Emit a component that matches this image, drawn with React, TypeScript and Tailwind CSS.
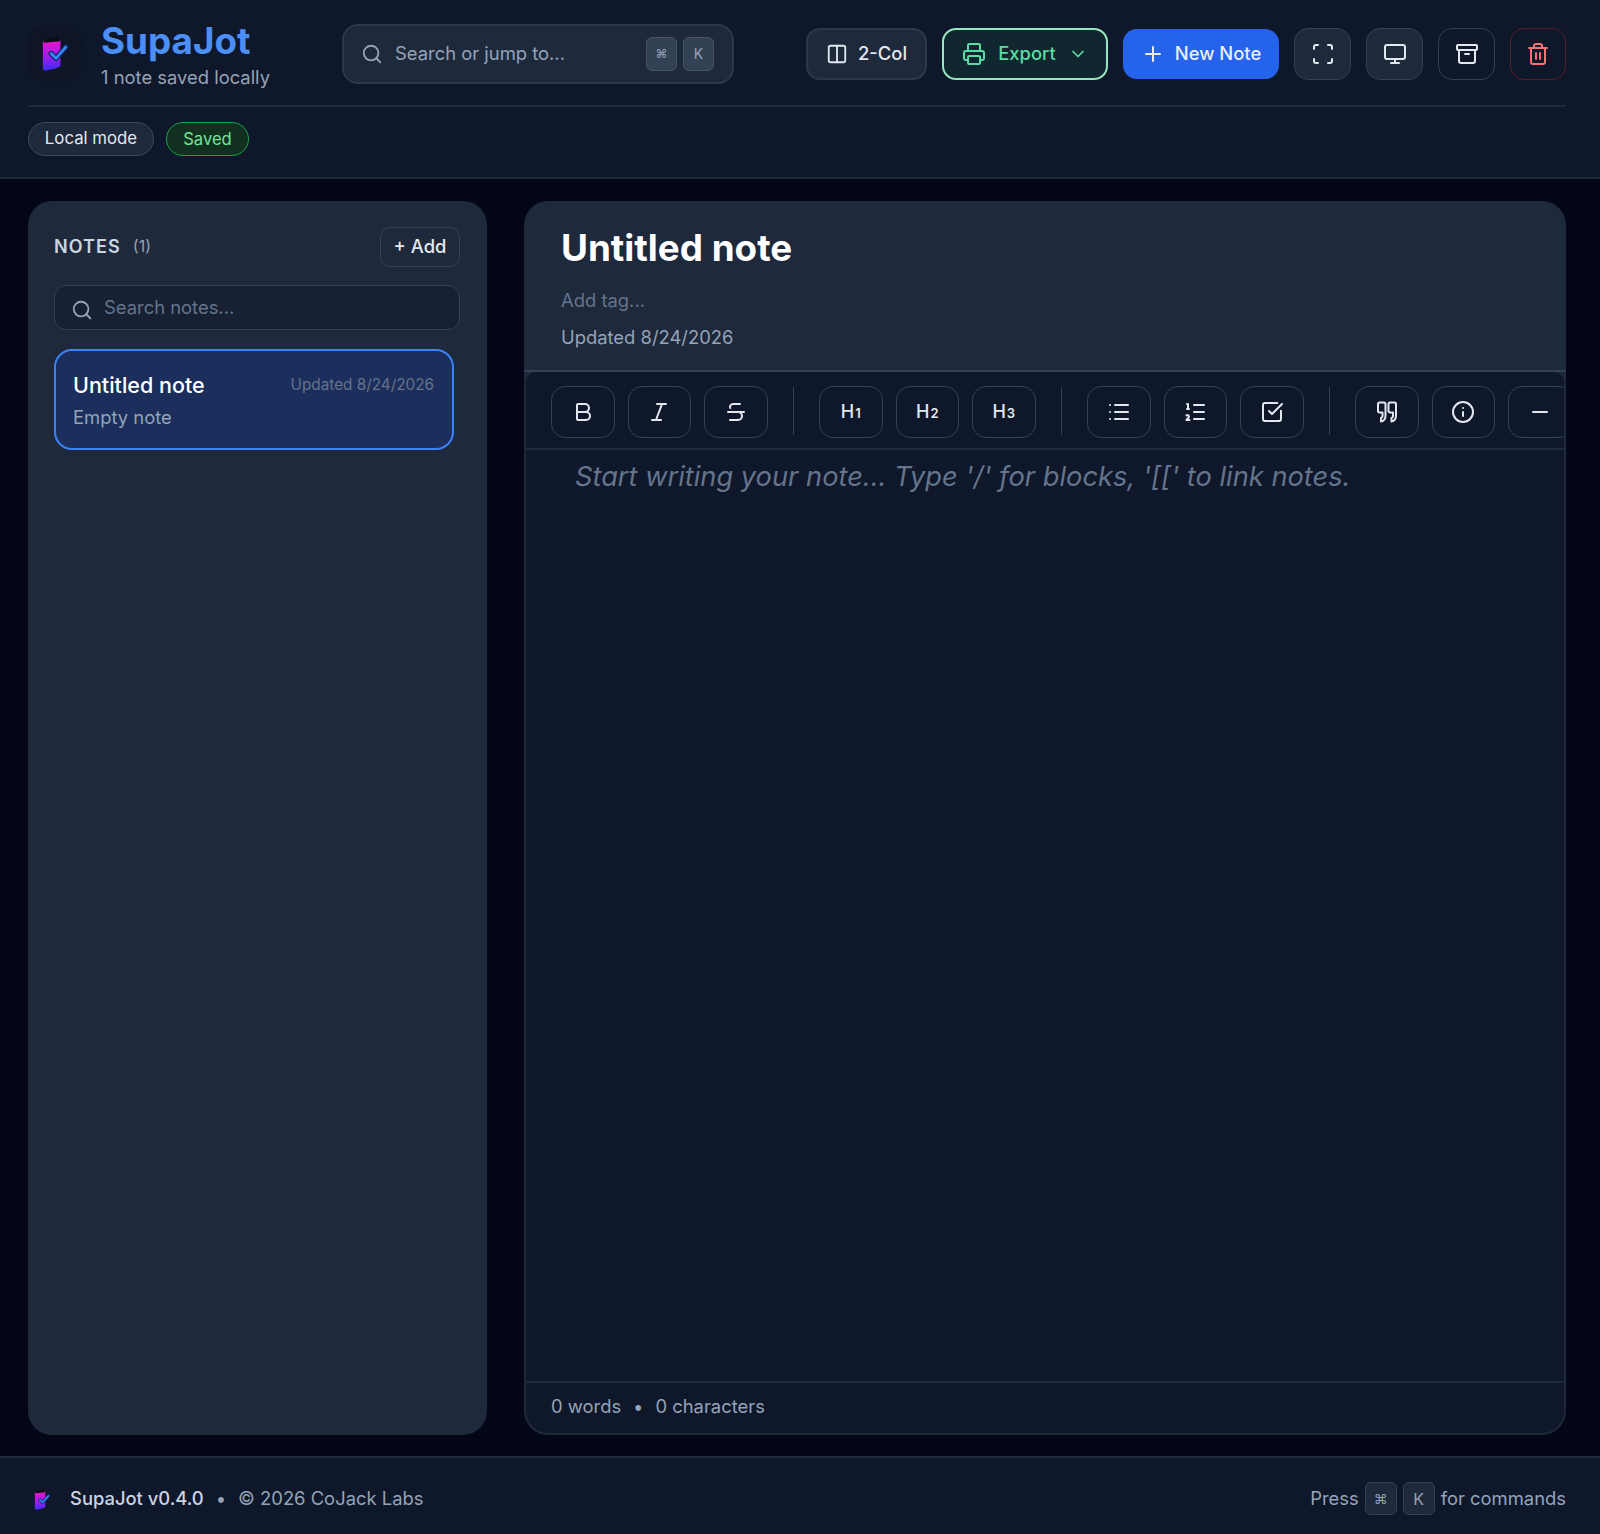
import React from 'react';
import {
  Search, Columns2, Printer, ChevronDown, Plus, Scan, Monitor, Archive, Trash2,
  Bold, Italic, Strikethrough, List, ListOrdered, SquareCheckBig, Info, Minus,
} from 'lucide-react';

const Logo: React.FC<{ size: number; id: string }> = ({ size, id }) => (
  <svg width={size} height={size} viewBox="0 0 36 38" fill="none">
    <defs>
      <linearGradient id={id} x1="0" y1="0" x2="0" y2="1">
        <stop offset="0" stopColor="#ee14c8" />
        <stop offset="0.55" stopColor="#a01cf0" />
        <stop offset="1" stopColor="#3a2cf5" />
      </linearGradient>
    </defs>
    <path d="M4 8 L22 6 L22 33 L17 35.500 L7 37.500 Q4 38 4 35 Z" fill={`url(#${id})`} />
    <path d="M5 9 L7 4.500 L10 6 L12.500 2 L15 5 L18 2.500 L21.500 6 L21.500 7.500 Z" fill="#0a0c16" />
    <path d="M12.500 20 L17.500 25 L27.500 13.500" stroke="#14225e" strokeWidth="5.500" strokeLinecap="round" strokeLinejoin="round" />
    <path d="M12.500 20 L17.500 25 L27.500 13.500" stroke="#3388f5" strokeWidth="3" strokeLinecap="round" strokeLinejoin="round" />
  </svg>
);

const QuoteGlyph: React.FC = () => (
  <svg width="24" height="24" viewBox="0 0 24 24" fill="none" stroke="currentColor" strokeWidth="2" strokeLinecap="round" strokeLinejoin="round">
    <path d="M4.500 2.500H9a1.500 1.500 0 0 1 1.500 1.500v11.500c0 3.500-1.500 5.500-4.500 6v-3.500c1 -.3 1.500 -1 1.500 -2V12.500h-3A1.500 1.500 0 0 1 3 11V4a1.500 1.500 0 0 1 1.500-1.500Z" />
    <path d="M15 2.500h4.500A1.500 1.500 0 0 1 21 4v11.500c0 3.500-1.500 5.500-4.500 6v-3.500c1 -.3 1.500 -1 1.500 -2V12.500h-3A1.500 1.500 0 0 1 13.500 11V4A1.500 1.500 0 0 1 15 2.500Z" />
  </svg>
);

const Key: React.FC<{ children: React.ReactNode; className?: string }> = ({ children, className }) => (
  <span className={`flex items-center justify-center rounded-md border ${className ?? ''}`}>
    {children}
  </span>
);

const ToolButton: React.FC<{ children: React.ReactNode }> = ({ children }) => (
  <button className="flex h-[52px] w-[63.5px] shrink-0 items-center justify-center rounded-[14px] border border-[#334155] text-[#e2e8f0]">
    {children}
  </button>
);

const HeadingLabel: React.FC<{ n: number }> = ({ n }) => (
  <span className="flex items-baseline text-[18px] font-medium text-[#e2e8f0]">
    H<span className="ml-[1px] text-[13px] font-semibold">{n}</span>
  </span>
);

const Sep: React.FC = () => <div className="mx-3 -mt-[2px] h-[48px] w-[1.5px] shrink-0 bg-[#334155]" />;

const HeadButton: React.FC<{ children: React.ReactNode; className?: string }> = ({ children, className }) => (
  <button className={`flex h-[52px] items-center justify-center rounded-[14px] border ${className ?? ''}`}>
    {children}
  </button>
);

export default function App() {
  return (
    <div className="flex h-[1534px] flex-col overflow-hidden bg-[#020617] font-['Inter',sans-serif] text-[18.4px] text-[#e2e8f0]">
      {/* Header */}
      <header className="shrink-0 border-b-2 border-[#1e293b] bg-[#0f172a] pr-[34px] pl-7">
        <div className="flex h-[107px] items-center border-b-2 border-[#1e293b] pt-[2px]">
          <div className="flex w-[314px] shrink-0 items-center gap-[18px]">
            <div className="flex h-[56px] w-[54px] items-center justify-center rounded-2xl bg-[#0e1526] pb-[3px] pl-[3px]">
              <Logo size={37} id="logo-a" />
            </div>
            <div className="pl-[1px]">
              <div className="mt-[1px] text-[36.8px] leading-[44px] font-bold text-[#4b8ff6]">SupaJot</div>
              <div className="mt-[2px] leading-[24px] text-[#94a3b8]">1 note saved locally</div>
            </div>
          </div>
          <div className="flex h-[60px] w-[392px] shrink-0 items-center rounded-2xl border-2 border-[#2c384b] bg-[#1e293b] pr-[18px] pl-[17px]">
            <Search className="h-[22px] w-[22px] text-[#94a3b8]" strokeWidth={2} />
            <span className="ml-3 flex-1 text-[#94a3b8]">Search or jump to...</span>
            <Key className="h-[34px] w-[31px] border-[#465468] bg-[#334155] text-xs text-[#94a3b8]">⌘</Key>
            <Key className="ml-[6px] h-[34px] w-[31px] border-[#465468] bg-[#334155] text-sm text-[#94a3b8]">K</Key>
          </div>
          <div className="ml-auto flex items-center gap-[15px]">
            <button className="flex h-[52px] w-[121px] items-center justify-center gap-[10px] rounded-[14px] border-2 border-[#2c384b] bg-[#1e293b] font-medium">
              <Columns2 className="h-[22px] w-[22px]" strokeWidth={2} />
              2-Col
            </button>
            <button className="flex h-[52px] w-[166px] items-center justify-center rounded-[14px] border-2 border-[#97e8bf] bg-[#11272f] font-medium text-[#5bdba6]">
              <Printer className="h-6 w-6" strokeWidth={2} />
              <span className="mr-3 ml-3">Export</span>
              <ChevronDown className="h-5 w-5" strokeWidth={2} />
            </button>
            <button className="flex h-[50px] w-[156px] items-center justify-center gap-[10px] rounded-[14px] bg-[#2563eb] font-medium text-[#e8eefc]">
              <Plus className="h-6 w-6" strokeWidth={2} />
              New Note
            </button>
            <HeadButton className="w-[57px] border-[#334155] bg-[#1e293b]"><Scan className="h-6 w-6" strokeWidth={2} /></HeadButton>
            <HeadButton className="w-[57px] border-[#334155] bg-[#1e293b]"><Monitor className="h-6 w-6" strokeWidth={2} /></HeadButton>
            <HeadButton className="w-[57px] border-[#334155]"><Archive className="h-6 w-6" strokeWidth={2} /></HeadButton>
            <HeadButton className="w-[56px] border-[#5b1d28] text-[#f87171]"><Trash2 className="h-6 w-6" strokeWidth={2} /></HeadButton>
          </div>
        </div>
        <div className="flex h-[70px] items-center gap-3 pb-[6px]">
          <span className="flex h-[34px] w-[126px] items-center justify-center rounded-full border border-[#3c4a5f] bg-[#1e293b] text-[16.8px]">Local mode</span>
          <span className="flex h-[34px] w-[83px] items-center justify-center rounded-full border border-[#16a34a] bg-[#12301f] text-[16.6px] text-[#74e398]">Saved</span>
        </div>
      </header>

      {/* Main */}
      <main className="flex min-h-0 flex-1 gap-[37px] pt-[22px] pr-[34px] pb-[21px] pl-7">
        <aside className="flex w-[459px] shrink-0 flex-col rounded-[24px] bg-[#1e293b] pt-[26px] pr-[27px] pl-[26px]">
          <div className="flex h-[40px] items-center">
            <span className="-mt-[2px] text-[18px] font-semibold tracking-[0.06em] text-[#cbd5e1]">NOTES</span>
            <span className="-mt-[2px] ml-[12px] text-base text-[#94a3b8]">(1)</span>
            <button className="ml-auto flex h-[40px] w-[80px] items-center justify-center rounded-[10px] border border-[#334155] font-medium">+ Add</button>
          </div>
          <div className="mt-[18px] flex h-[45px] items-center rounded-xl border border-[#334155] bg-[#172133] pr-3 pl-4">
            <Search className="mt-1 h-[22px] w-[22px] text-[#94a3b8]" strokeWidth={2} />
            <span className="ml-[11px] text-[#64748b]">Search notes...</span>
          </div>
          <div className="mt-[19px] h-[101px] w-[400px] rounded-[18px] border-2 border-[#3b82f6] bg-[#1c2e5c] px-[17px] pt-5">
            <div className="flex items-center justify-between">
              <span className="text-[21.5px] leading-7 font-medium text-white">Untitled note</span>
              <span className="mr-[1px] text-[15.3px] text-[#64748b]">Updated 8/24/2026</span>
            </div>
            <div className="mt-[6px] leading-6 text-[#94a3b8]">Empty note</div>
          </div>
        </aside>

        <section className="flex min-w-0 flex-1 flex-col overflow-hidden rounded-[24px] bg-[#1e293b]">
          <div className="h-[171px] shrink-0 border-b-2 border-[#334155] px-[37px] pt-[23px]">
            <h1 className="text-[36.8px] leading-[48px] font-bold text-white">Untitled note</h1>
            <div className="mt-4 leading-6 text-[#64748b]">Add tag...</div>
            <div className="mt-[13px] leading-6 text-[#94a3b8]">Updated 8/24/2026</div>
          </div>
          <div className="mx-[2px] mb-[2px] flex min-h-0 flex-1 flex-col overflow-hidden rounded-t-[10px] rounded-b-[22px] bg-[#0f172a]">
            <div className="flex h-[78px] shrink-0 items-center gap-[13px] border-b-2 border-[#1e293b] pt-[3px] pl-[25px]">
              <ToolButton><Bold className="h-6 w-6" strokeWidth={2} /></ToolButton>
              <ToolButton><Italic className="h-6 w-6" strokeWidth={2} /></ToolButton>
              <ToolButton><Strikethrough className="h-6 w-6" strokeWidth={2} /></ToolButton>
              <Sep />
              <ToolButton><HeadingLabel n={1} /></ToolButton>
              <ToolButton><HeadingLabel n={2} /></ToolButton>
              <ToolButton><HeadingLabel n={3} /></ToolButton>
              <Sep />
              <ToolButton><List className="h-6 w-6" strokeWidth={2} /></ToolButton>
              <ToolButton><ListOrdered className="h-6 w-6" strokeWidth={2} /></ToolButton>
              <ToolButton><SquareCheckBig className="h-6 w-6" strokeWidth={2} /></ToolButton>
              <Sep />
              <ToolButton><QuoteGlyph /></ToolButton>
              <ToolButton><Info className="h-6 w-6" strokeWidth={2} /></ToolButton>
              <ToolButton><Minus className="h-6 w-6" strokeWidth={2} /></ToolButton>
            </div>
            <div className="flex-1 pt-[9px] pl-[49px] text-[27.25px] leading-[36px] text-[#64748b] italic">
              Start writing your note... Type '/' for blocks, '[[' to link notes.
            </div>
            <div className="flex h-[52px] shrink-0 items-center border-t-2 border-[#1e293b] pb-[2px] pl-[25px] text-[#94a3b8]">
              <span>0 words</span>
              <span className="mx-3">•</span>
              <span>0 characters</span>
            </div>
          </div>
        </section>
      </main>

      {/* Footer */}
      <footer className="flex h-[78px] shrink-0 items-center border-t-2 border-[#1e293b] bg-[#0f172a] pt-[5px] pr-[34px] pl-7">
        <div className="mr-[14px] ml-[4px]"><Logo size={22} id="logo-b" /></div>
        <span className="ml-[2px] font-medium text-[#cbd5e1]">SupaJot v0.4.0</span>
        <span className="mx-3 text-[#94a3b8]">•</span>
        <span className="text-[#94a3b8]">© 2026 CoJack Labs</span>
        <div className="ml-auto flex items-center gap-[6px] text-[#94a3b8]">
          <span>Press</span>
          <Key className="h-[33px] w-[32px] border-[#334155] bg-[#1e293b] text-sm">⌘</Key>
          <Key className="h-[33px] w-[32px] border-[#334155] bg-[#1e293b] text-base">K</Key>
          <span>for commands</span>
        </div>
      </footer>
    </div>
  );
}
